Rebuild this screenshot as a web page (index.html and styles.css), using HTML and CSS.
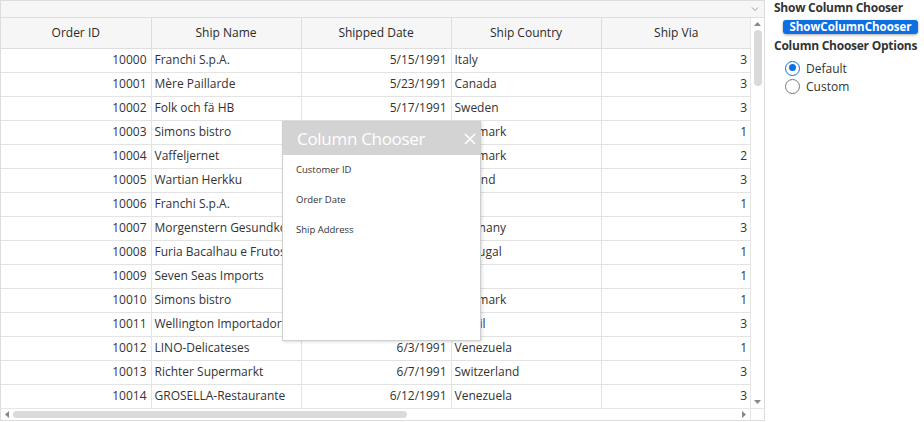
FILE: index.html
```html
<!DOCTYPE html>
<html>
<head>
<meta charset="utf-8">
<link rel="stylesheet" href="styles.css">
</head>
<body>
<div class="page">
  <div class="grid">
    <div class="toolbar"><svg class="chev" width="8" height="6" viewBox="0 0 8 6"><path d="M1 1.5 L4 4.5 L7 1.5" fill="none" stroke="#999" stroke-width="1"/></svg></div>
    <div class="main">
      <div class="table-area">
        <table class="tbl">
          <colgroup><col class="c"><col class="c"><col class="c"><col class="c"><col class="c"></colgroup>
          <thead>
            <tr><th>Order ID</th><th>Ship Name</th><th>Shipped Date</th><th>Ship Country</th><th>Ship Via</th></tr>
          </thead>
          <tbody>
            <tr><td class="r">10000</td><td>Franchi S.p.A.</td><td class="r">5/15/1991</td><td>Italy</td><td class="r">3</td></tr>
            <tr><td class="r">10001</td><td>Mère Paillarde</td><td class="r">5/23/1991</td><td>Canada</td><td class="r">3</td></tr>
            <tr><td class="r">10002</td><td>Folk och fä HB</td><td class="r">5/17/1991</td><td>Sweden</td><td class="r">3</td></tr>
            <tr><td class="r">10003</td><td>Simons bistro</td><td class="r">5/24/1991</td><td>Denmark</td><td class="r">1</td></tr>
            <tr><td class="r">10004</td><td>Vaffeljernet</td><td class="r">5/27/1991</td><td>Denmark</td><td class="r">2</td></tr>
            <tr><td class="r">10005</td><td>Wartian Herkku</td><td class="r">5/29/1991</td><td>Finland</td><td class="r">3</td></tr>
            <tr><td class="r">10006</td><td>Franchi S.p.A.</td><td class="r">5/30/1991</td><td>Italy</td><td class="r">1</td></tr>
            <tr><td class="r">10007</td><td>Morgenstern Gesundkost</td><td class="r">5/31/1991</td><td>Germany</td><td class="r">3</td></tr>
            <tr><td class="r">10008</td><td>Furia Bacalhau e Frutos do Mar</td><td class="r">5/29/1991</td><td>Portugal</td><td class="r">1</td></tr>
            <tr><td class="r">10009</td><td>Seven Seas Imports</td><td class="r">5/30/1991</td><td>UK</td><td class="r">1</td></tr>
            <tr><td class="r">10010</td><td>Simons bistro</td><td class="r">5/31/1991</td><td>Denmark</td><td class="r">1</td></tr>
            <tr><td class="r">10011</td><td>Wellington Importadora</td><td class="r">6/1/1991</td><td>Brazil</td><td class="r">3</td></tr>
            <tr><td class="r">10012</td><td>LINO-Delicateses</td><td class="r">6/3/1991</td><td>Venezuela</td><td class="r">1</td></tr>
            <tr><td class="r">10013</td><td>Richter Supermarkt</td><td class="r">6/7/1991</td><td>Switzerland</td><td class="r">3</td></tr>
            <tr><td class="r">10014</td><td>GROSELLA-Restaurante</td><td class="r">6/12/1991</td><td>Venezuela</td><td class="r">3</td></tr>
          </tbody>
        </table>
      </div>
      <div class="vscroll">
        <div class="vtop"><svg width="7" height="4" viewBox="0 0 7 4"><path d="M0 4 L3.5 0 L7 4Z" fill="#888"/></svg></div>
        <div class="vtrack"><div class="vthumb"></div></div>
        <div class="vbot"><svg width="7" height="4" viewBox="0 0 7 4"><path d="M0 0 L3.5 4 L7 0Z" fill="#888"/></svg></div>
      </div>
    </div>
    <div class="hrow">
      <div class="hscroll">
        <div class="hleft"><svg width="4" height="7" viewBox="0 0 4 7"><path d="M4 0 L0 3.5 L4 7Z" fill="#888"/></svg></div>
        <div class="htrack"><div class="hthumb"></div></div>
        <div class="hright"><svg width="4" height="7" viewBox="0 0 4 7"><path d="M0 0 L4 3.5 L0 7Z" fill="#888"/></svg></div>
      </div>
      <div class="corner"></div>
    </div>

    <div class="chooser">
      <div class="chooser-head"><span class="chooser-title">Column Chooser</span><svg class="chooser-close" width="12" height="12" viewBox="0 0 12 12"><path d="M1 1 L11 11 M11 1 L1 11" stroke="#fff" stroke-width="1.6" fill="none"/></svg></div>
      <div class="chooser-item">Customer ID</div>
      <div class="chooser-item">Order Date</div>
      <div class="chooser-item">Ship Address</div>
    </div>
  </div>

  <div class="panel">
    <div class="ptitle">Show Column Chooser</div>
    <div class="btn-row"><button class="btn">ShowColumnChooser</button></div>
    <div class="ptitle">Column Chooser Options</div>
    <div class="radios">
      <label class="radio"><span class="dot on"></span>Default</label>
      <label class="radio"><span class="dot"></span>Custom</label>
    </div>
  </div>
</div>
</body>
</html>
```
FILE: styles.css
```css
* { box-sizing: border-box; }
html, body { margin: 0; padding: 0; background: #fff; }
body { font-family: "Open Sans", "Noto Sans", sans-serif; font-size: 12px; color: #333; }

.page { display: flex; align-items: flex-start; }

.grid {
  position: relative;
  width: 765px;
  height: 421px;
  border: 1px solid #dcdcdc;
  display: flex;
  flex-direction: column;
  background: #fff;
}

.toolbar {
  height: 17px;
  flex: none;
  background: #f6f6f6;
  border-bottom: 1px solid #dedede;
  display: flex;
  justify-content: flex-end;
  align-items: center;
  padding-right: 5px;
}

.main { display: flex; flex: none; height: 390px; }
.table-area { width: 750px; overflow: hidden; border-right: 1px solid #e6e6e6; }

.tbl { border-collapse: collapse; table-layout: fixed; width: 750px; }
.tbl col.c { width: 150px; }
.tbl th {
  height: 30px;
  background: #f6f6f6;
  font-weight: 400;
  color: #2a2a2a;
  font-size: 12px;
  text-align: center;
  border-right: 1px solid #dedede;
  border-bottom: 1px solid #dedede;
  padding: 0 0 1px;
}
.tbl td {
  height: 24px;
  padding: 0 4px 1px 3px;
  border-right: 1px solid #e3e3e3;
  border-bottom: 1px solid #e3e3e3;
  white-space: nowrap;
  overflow: hidden;
  font-size: 12px;
  color: #333;
}
.tbl tr > :last-child { border-right: none; }
.tbl td.r { text-align: right; }

.vscroll {
  width: 13px;
  display: flex;
  flex-direction: column;
  background: #fff;
}
.vtop, .vbot { height: 12px; display: flex; align-items: center; justify-content: center; }
.vtrack { flex: 1; padding: 0 2px; }
.vthumb { margin-top: 0; height: 56px; background: #dadada; border-radius: 4px; width: 8px; margin-left: 1px; }
.vbot { margin-top: auto; }

.hrow { display: flex; height: 12px; flex: none; border-top: 1px solid #e6e6e6; }
.hscroll { width: 750px; display: flex; align-items: center; border-right: 1px solid #e6e6e6; }
.hleft, .hright { width: 12px; display: flex; align-items: center; justify-content: center; }
.htrack { flex: 1; }
.hthumb { width: 394px; height: 7px; background: #dadada; border-radius: 4px; }
.corner { flex: 1; }

.chooser {
  position: absolute;
  left: 281px;
  top: 120px;
  width: 199px;
  height: 220px;
  background: #fff;
  border: 1px solid #cfcfcf;
  box-shadow: 1px 1px 3px rgba(0,0,0,0.15);
}
.chooser-head {
  height: 33px;
  background: #d3d3d3;
  display: flex;
  align-items: center;
  justify-content: space-between;
  padding: 0 4px 0 14px;
  color: #fff;
}
.chooser-title { font-size: 17px; font-weight: 400; letter-spacing: -0.3px; }
.chooser-close { display: block; }
.chooser-item { font-size: 9.5px; color: #333; height: 30px; line-height: 30px; padding-left: 13px; }

.panel { padding: 0 0 0 9px; flex: 1; }
.ptitle { font-weight: 700; font-size: 12px; letter-spacing: -0.25px; color: #333; height: 15px; line-height: 15px; white-space: nowrap; }
.btn-row { padding: 5px 0 4px 9px; }
.btn {
  display: block;
  font-family: inherit;
  font-weight: 700;
  font-size: 11.5px;
  color: #fff;
  background: #0e6fe3;
  border: none;
  border-radius: 3px;
  height: 14px;
  width: 135px;
  line-height: 14px;
  padding: 0;
  box-shadow: 0 1px 3px rgba(0,0,0,0.35);
}
.radios { padding-top: 6px; }
.radio { display: flex; align-items: center; height: 18px; padding-left: 11px; gap: 6px; font-size: 12px; color: #333; }
.dot { width: 15px; height: 15px; border-radius: 50%; border: 1.5px solid #777; display: inline-block; position: relative; }
.dot.on { border-color: #0e6fe3; }
.dot.on::after { content: ""; position: absolute; left: 2.5px; top: 2.5px; width: 7px; height: 7px; border-radius: 50%; background: #0e6fe3; }
```
